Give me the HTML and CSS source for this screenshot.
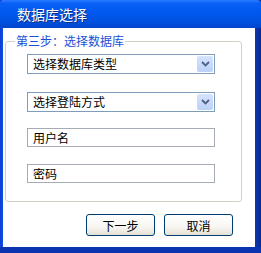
FILE: index.html
```html
<!DOCTYPE html>
<html>
<head>
<meta charset="utf-8">
<link rel="stylesheet" href="styles.css">
</head>
<body>
<div class="window">
  <div class="titlebar">数据库选择</div>
  <div class="content">
    <fieldset class="group">
      <legend class="legend">第三步：选择数据库</legend>
      <div class="select">
        <span class="select-text">选择数据库类型</span>
        <span class="select-btn"><svg width="9" height="6" viewBox="0 0 9 6"><path d="M1 1 L4.5 4.5 L8 1" fill="none" stroke="#4d6185" stroke-width="1.8"/></svg></span>
      </div>
      <div class="select second">
        <span class="select-text">选择登陆方式</span>
        <span class="select-btn"><svg width="9" height="6" viewBox="0 0 9 6"><path d="M1 1 L4.5 4.5 L8 1" fill="none" stroke="#4d6185" stroke-width="1.8"/></svg></span>
      </div>
      <div class="field user">用户名</div>
      <div class="field pass">密码</div>
    </fieldset>
    <div class="buttons">
      <button class="btn">下一步</button>
      <button class="btn">取消</button>
    </div>
  </div>
</div>
</body>
</html>
```

FILE: styles.css
```css
* { box-sizing: border-box; }
html, body { margin: 0; padding: 0; background: #ffffff; }
body {
  font-family: "Noto Sans CJK SC", "Noto Sans", sans-serif;
  font-size: 12px;
  color: #000;
}
.window {
  width: 261px;
  height: 253px;
  display: flex;
  flex-direction: column;
  background: linear-gradient(90deg, #0a3fd6 0%, #1050e0 1.2%, #ffffff 1.2%, #ffffff 97.7%, #0c36b4 97.7%, #0a2a8e 100%);
  border-bottom: 6px solid #0a34b0;
}
.titlebar {
  height: 28px;
  flex: none;
  background: linear-gradient(180deg, #2a7cff 0%, #0a60f6 12%, #0058ee 45%, #0052e2 75%, #0046cc 100%);
  color: #ffffff;
  font-size: 14px;
  line-height: 28px;
  padding-left: 17px;
  border-radius: 4px 4px 0 0;
  text-shadow: 1px 1px 0 #0a2f8a;
}
.content {
  flex: 1;
  margin: 0 6px 0 3px;
  background: #ffffff;
  display: flex;
  flex-direction: column;
}
.group {
  margin: 6px 0 0 2px;
  width: 237px;
  border: 1px solid #d4d0c0;
  border-radius: 3px;
  padding: 6px 0 18px 21px;
  display: flex;
  flex-direction: column;
}
.legend {
  color: #1b4fd8;
  font-size: 12px;
  line-height: 14px;
  padding: 0 1px;
  margin-left: -12px;
}
.select {
  width: 188px;
  height: 20px;
  border: 1px solid #7f9db9;
  display: flex;
  align-items: stretch;
  background: #fff;
}
.select.second { margin-top: 18px; }
.select-text {
  flex: 1;
  padding-left: 5px;
  line-height: 18px;
}
.select-btn {
  width: 16px;
  margin: 1px;
  background: linear-gradient(180deg, #d6e3fd 0%, #bcd0f8 100%);
  border-radius: 2px;
  display: flex;
  align-items: center;
  justify-content: center;
}
.field {
  width: 188px;
  height: 19px;
  border: 1px solid #a5acb5;
  line-height: 17px;
  padding-left: 5px;
  background: #fff;
}
.field.user { margin-top: 16px; }
.field.pass { margin-top: 17px; }
.buttons {
  display: flex;
  justify-content: flex-end;
  gap: 9px;
  margin-top: 12px;
  padding-right: 22px;
}
.btn {
  width: 69px;
  height: 22px;
  font-family: "Noto Sans CJK SC", "Noto Sans", sans-serif;
  font-size: 12px;
  color: #000;
  border: 1px solid #003c74;
  border-radius: 3px;
  background: linear-gradient(180deg, #ffffff 0%, #f7f6f1 60%, #e3e0d4 100%);
  padding: 0;
}
```
